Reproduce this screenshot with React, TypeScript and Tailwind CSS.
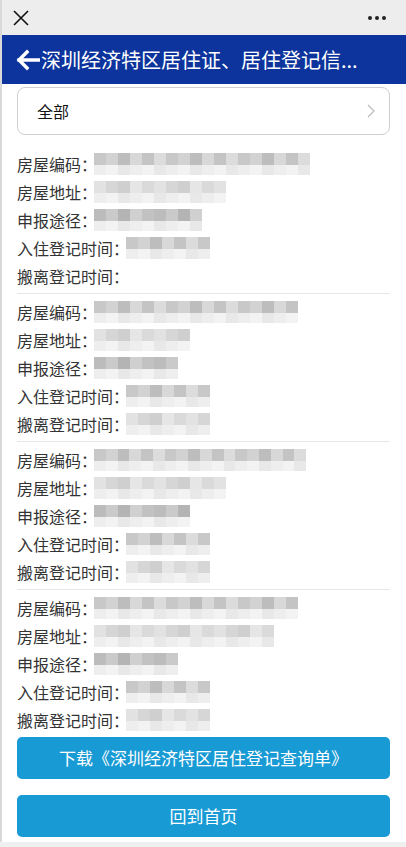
import React from "react";

const font = { fontFamily: '"Noto Sans CJK SC", "Noto Sans", sans-serif' };

function Blur({ w, shades, two }: { w: number; shades: string[]; two?: string[] }) {
  const cells = Math.round(w / 12);
  const lower = two || ["#eeeeee", "#f3f3f3", "#e8e8e8"];
  return (
    <div className="flex flex-col" style={{ width: w }}>
      <div className="flex h-[12px]">
        {Array.from({ length: cells }).map((_, i) => (
          <div key={i} className="w-[12px] h-[12px]" style={{ background: shades[i % shades.length] }} />
        ))}
      </div>
      <div className="flex h-[10px]">
        {Array.from({ length: cells }).map((_, i) => (
          <div key={i} className="w-[12px] h-[10px]" style={{ background: lower[i % lower.length] }} />
        ))}
      </div>
    </div>
  );
}

const A = ["#c8c8c8", "#d2d2d2", "#bdbdbd", "#d8d8d8", "#c4c4c4", "#dcdcdc"];
const B = ["#e2e2e2", "#d6d6d6", "#cfcfcf", "#e6e6e6", "#dadada"];
const C = ["#bcbcbc", "#cacaca", "#b4b4b4", "#d0d0d0", "#c2c2c2"];

type Rec = { w: number[] };

const records: Rec[] = [
  { w: [216, 132, 108, 84, 0] },
  { w: [204, 96, 84, 84, 84] },
  { w: [212, 132, 96, 84, 84] },
  { w: [204, 180, 84, 84, 84] },
];

const labels = ["房屋编码：", "房屋地址：", "申报途径：", "入住登记时间：", "搬离登记时间："];

export default function App() {
  return (
    <div className="w-[406px] h-[847px] bg-white relative overflow-hidden text-[#333]" style={font}>
      <div className="absolute left-0 top-0 bottom-0 w-[2px] bg-[#d9d9d9]" />
      {/* top bar */}
      <div className="h-[35px] bg-[#ededed] flex items-center justify-between pl-[13px] pr-[20px]">
        <svg width="16" height="16" viewBox="0 0 16 16">
          <path d="M1 1 L15 15 M15 1 L1 15" stroke="#111" strokeWidth="1.6" />
        </svg>
        <div className="flex gap-[3px]">
          <div className="w-[4px] h-[4px] rounded-full bg-[#222]" />
          <div className="w-[4px] h-[4px] rounded-full bg-[#222]" />
          <div className="w-[4px] h-[4px] rounded-full bg-[#222]" />
        </div>
      </div>
      {/* header */}
      <div className="h-[49px] bg-[#0c349c] flex items-center pl-[16px] text-white">
        <svg width="24" height="22" viewBox="0 0 24 22" className="shrink-0">
          <path d="M11 3 L3 11 L11 19 M3 11 L23 11" stroke="white" strokeWidth="3.4" fill="none" strokeLinecap="square" />
        </svg>
        <span className="text-[20px] leading-none ml-[1px] whitespace-nowrap">深圳经济特区居住证、居住登记信...</span>
      </div>
      {/* content */}
      <div className="px-[16px] ml-[1px]">
        <div className="mt-[3px] h-[48px] border border-[#cfcfcf] rounded-[8px] flex items-center justify-between pl-[19px] pr-[14px]">
          <span className="text-[16px] text-[#111]">全部</span>
          <svg width="8" height="14" viewBox="0 0 8 14">
            <path d="M1 1 L7 7 L1 13" stroke="#bbb" strokeWidth="1.2" fill="none" />
          </svg>
        </div>
        <div className="mt-[11px]">
          {records.map((r, ri) => (
            <div key={ri} className={`pt-[4px] pb-[3px] ${ri < records.length - 1 ? "border-b border-[#e6e6e6]" : ""}`}>
              {labels.map((l, li) => (
                <div key={li} className="h-[28px] flex items-center text-[16px] text-[#333]">
                  <span className="mr-[-3px]">{l}</span>
                  {r.w[li] > 0 && (
                    <Blur w={r.w[li]} shades={li % 3 === 0 ? A : li % 3 === 1 ? B : C} />
                  )}
                </div>
              ))}
            </div>
          ))}
        </div>
        <div className="mt-[0px] h-[42px] rounded-[5px] bg-[#189ad4] flex items-center justify-center text-white text-[17px]">
          下载《深圳经济特区居住登记查询单》
        </div>
        <div className="mt-[16px] h-[42px] rounded-[5px] bg-[#189ad4] flex items-center justify-center text-white text-[17px]">
          回到首页
        </div>
      </div>
      <div className="absolute left-0 right-0 bottom-0 h-[5px] bg-[#f0f0f0]" />
    </div>
  );
}
